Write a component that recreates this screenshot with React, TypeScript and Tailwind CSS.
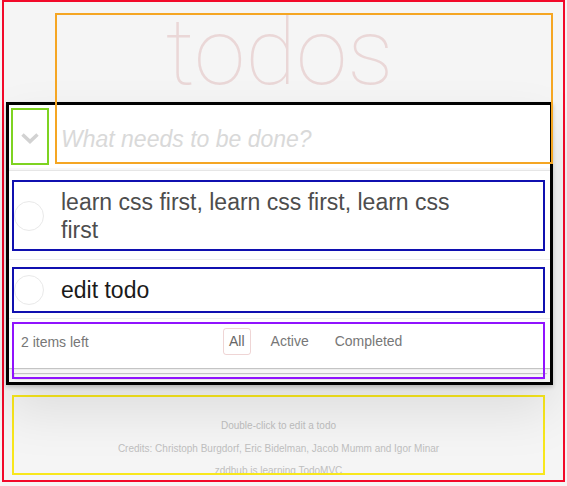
import React from 'react';

const todos = [
  { id: 1, title: 'learn css first, learn css first, learn css first', dark: false, liH: 'h-[89px] pt-[9px]', boxH: 'h-[71px]' },
  { id: 2, title: 'edit todo', dark: true, liH: 'h-[59px] pt-[7px]', boxH: 'h-[46px]' },
];

const filters = ['All', 'Active', 'Completed'];

function Chevron() {
  return (
    <svg width="18" height="11" viewBox="0 0 18 11" className="mt-[3px]">
      <path d="M1.5 1.5 L9 8.5 L16.5 1.5" fill="none" stroke="#d2d2d2" strokeWidth="3.5" />
    </svg>
  );
}

export default function App() {
  return (
    <div className="w-[567px] h-[486px] bg-[#f5f5f5] overflow-hidden font-['Liberation_Sans',Arial,sans-serif]">
      {/* body outline */}
      <div className="ml-[2px] w-[563px] h-[482px] border-2 border-[#f20a2a]">
        <section className="relative ml-[2px] mt-[100px] w-[547px] h-[283px] border-[3px] border-black shadow-[0_2px_4px_rgba(0,0,0,0.2),0_25px_50px_rgba(0,0,0,0.1)]">
          <h1 className="absolute left-0 right-0 top-[-100px] text-center font-['Roboto',sans-serif] font-thin text-[93px] leading-[96px] text-[rgba(175,47,47,0.15)]">
            todos
          </h1>

          <header className="h-[66px] flex items-start bg-white border-b border-[#e6e6e6] shadow-[inset_0_-2px_1px_rgba(0,0,0,0.03)]">
            <label className="ml-[2px] mt-[3px] w-[38px] h-[57px] border-2 border-[#7ed321] flex items-center justify-center">
              <Chevron />
            </label>
            <span className="ml-[12px] mt-[20px] text-[23px] leading-[28px] italic text-[#d9d9d9]">
              What needs to be done?
            </span>
          </header>

          {/* header outline */}
          <div className="absolute left-[46px] top-[-92px] w-[498px] h-[151px] border-2 border-[#f5a623] pointer-events-none" />

          <ul className="bg-white">
            {todos.map(t => (
              <li key={t.id} className={`${t.liH} border-b border-[#ededed]`}>
                <div className={`${t.boxH} ml-[3px] w-[533px] border-2 border-[#1010b0] flex items-center`}>
                  <span className="w-[30px] h-[30px] shrink-0 rounded-full border border-[#e9e9e9]" />
                  <span className={`ml-[17px] w-[410px] text-[23px] leading-[28px] ${t.dark ? 'text-[#1a1a1a]' : 'text-[#4d4d4d]'}`}>
                    {t.title}
                  </span>
                </div>
              </li>
            ))}
          </ul>

          <footer className="relative h-[63px] pt-[3px] text-[14px] text-[#777]">
            <div className="absolute inset-x-0 top-0 h-[49px] bg-white shadow-[0_1px_1px_rgba(0,0,0,0.2),0_8px_0_-3px_#f6f6f6,0_9px_1px_-3px_rgba(0,0,0,0.2),0_16px_0_-6px_#f6f6f6,0_17px_2px_-6px_rgba(0,0,0,0.2)]" />
            <div className="relative ml-[3px] w-[533px] h-[57px] border-2 border-[#9013fe] flex items-start">
              <span className="ml-[7px] mt-[8px] w-[202px] leading-[20px]">2 items left</span>
              <ul className="mt-[4px] flex gap-[14px]">
                {filters.map(f => (
                  <li key={f}>
                    <a className={`block h-[27px] px-[5px] leading-[25px] rounded-[3px] border ${f === 'All' ? 'border-[rgba(175,47,47,0.2)] text-[#666]' : 'border-transparent'}`}>
                      {f}
                    </a>
                  </li>
                ))}
              </ul>
            </div>
          </footer>
        </section>

        <footer className="ml-[8px] mt-[10px] w-[533px] h-[80px] border-2 border-[#f8e71c] overflow-hidden pt-[18px] text-center text-[10px] leading-[22.5px] text-[#bfbfbf]">
          <p>Double-click to edit a todo</p>
          <p>Credits: Christoph Burgdorf, Eric Bidelman, Jacob Mumm and Igor Minar</p>
          <p>zddhub is learning TodoMVC</p>
        </footer>
      </div>
    </div>
  );
}
